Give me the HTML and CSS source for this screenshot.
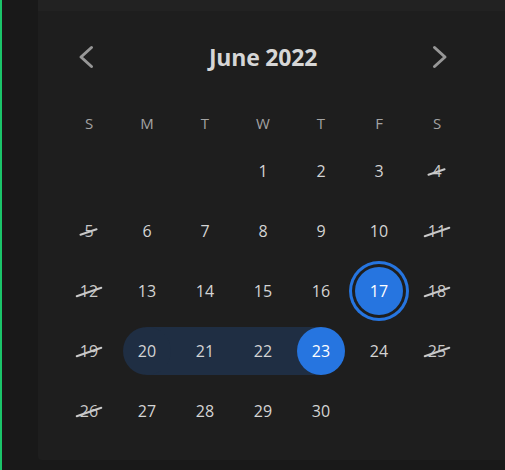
FILE: index.html
```html
<!DOCTYPE html>
<html lang="en">
<head>
<meta charset="utf-8">
<title>Calendar</title>
<link rel="stylesheet" href="styles.css">
</head>
<body>
<div class="app">
  <div class="rail"></div>
  <div class="main">
    <div class="topbar"></div>
    <div class="card">
      <div class="cal">
        <div class="head">
          <button class="nav" aria-label="Previous month">
            <svg width="16" height="24" viewBox="0 0 16 24"><polyline points="13.5,2.5 3,12 13.5,21.5" fill="none" stroke="currentColor" stroke-width="3" stroke-linecap="round" stroke-linejoin="round"/></svg>
          </button>
          <div class="title">June 2022</div>
          <button class="nav" aria-label="Next month">
            <svg width="16" height="24" viewBox="0 0 16 24"><polyline points="2.5,2.5 13,12 2.5,21.5" fill="none" stroke="currentColor" stroke-width="3" stroke-linecap="round" stroke-linejoin="round"/></svg>
          </button>
        </div>
        <div class="weekdays">
          <span>S</span><span>M</span><span>T</span><span>W</span><span>T</span><span>F</span><span>S</span>
        </div>
        <div class="grid">
          <div class="cell"></div>
          <div class="cell"></div>
          <div class="cell"></div>
          <div class="cell"><span class="n">1</span></div>
          <div class="cell"><span class="n">2</span></div>
          <div class="cell"><span class="n">3</span></div>
          <div class="cell"><span class="n"><span class="strike">4</span></span></div>

          <div class="cell"><span class="n"><span class="strike">5</span></span></div>
          <div class="cell"><span class="n">6</span></div>
          <div class="cell"><span class="n">7</span></div>
          <div class="cell"><span class="n">8</span></div>
          <div class="cell"><span class="n">9</span></div>
          <div class="cell"><span class="n">10</span></div>
          <div class="cell"><span class="n"><span class="strike">11</span></span></div>

          <div class="cell"><span class="n"><span class="strike">12</span></span></div>
          <div class="cell"><span class="n">13</span></div>
          <div class="cell"><span class="n">14</span></div>
          <div class="cell"><span class="n">15</span></div>
          <div class="cell"><span class="n">16</span></div>
          <div class="cell"><span class="n sel">17</span></div>
          <div class="cell"><span class="n"><span class="strike">18</span></span></div>

          <div class="cell"><span class="n"><span class="strike">19</span></span></div>
          <div class="cell range-start"><span class="n band">20</span></div>
          <div class="cell range-mid"><span class="n">21</span></div>
          <div class="cell range-mid"><span class="n">22</span></div>
          <div class="cell range-end"><span class="n end">23</span></div>
          <div class="cell"><span class="n">24</span></div>
          <div class="cell"><span class="n"><span class="strike">25</span></span></div>

          <div class="cell"><span class="n"><span class="strike">26</span></span></div>
          <div class="cell"><span class="n">27</span></div>
          <div class="cell"><span class="n">28</span></div>
          <div class="cell"><span class="n">29</span></div>
          <div class="cell"><span class="n">30</span></div>
          <div class="cell"></div>
          <div class="cell"></div>
        </div>
      </div>
    </div>
  </div>
</div>
</body>
</html>
```
FILE: styles.css
```css
* { box-sizing: border-box; }

html, body {
  margin: 0;
  padding: 0;
}

body {
  width: 505px;
  height: 470px;
  overflow: hidden;
  background: #191919;
  font-family: "Open Sans", "Noto Sans", sans-serif;
  color: #d4d4d4;
}

.app {
  display: flex;
  height: 470px;
}

.rail {
  width: 38px;
  flex: none;
  border-left: 2px solid #1bc46a;
  background: #191919;
}

.main {
  flex: 1;
  display: flex;
  flex-direction: column;
}

.topbar {
  height: 11px;
  background: #222222;
}

.card {
  height: 449px;
  background: #1e1e1e;
  border-bottom-left-radius: 4px;
  padding: 25px 0 0 22px;
}

.cal {
  width: 406px;
}

.head {
  height: 42px;
  display: flex;
  align-items: center;
  justify-content: space-between;
}

.nav {
  width: 52px;
  height: 42px;
  padding: 0;
  border: 0;
  background: transparent;
  color: #979797;
  display: flex;
  align-items: center;
  justify-content: center;
}

.title {
  font-size: 23px;
  font-weight: 700;
  color: #d6d6d6;
  letter-spacing: -0.2px;
}

.weekdays {
  margin-top: 27px;
  height: 36px;
  display: grid;
  grid-template-columns: repeat(7, 58px);
  align-items: center;
  text-align: center;
  font-size: 15px;
  color: #a3a3a3;
}

.grid {
  display: grid;
  grid-template-columns: repeat(7, 58px);
  grid-auto-rows: 60px;
}

.cell {
  display: flex;
  align-items: center;
  justify-content: center;
}

.n {
  width: 48px;
  height: 48px;
  border-radius: 50%;
  display: flex;
  align-items: center;
  justify-content: center;
  font-size: 16px;
  color: #d4d4d4;
}

.strike {
  position: relative;
  color: #c9c9c9;
}

.strike::after {
  content: "";
  position: absolute;
  left: -5px;
  right: -5px;
  top: 50%;
  height: 2px;
  background: #c9c9c9;
  border-radius: 1px;
  transform: rotate(-19deg);
}

.sel {
  background: #2675e0;
  color: #ffffff;
  box-shadow: 0 0 0 3px #1e1e1e, 0 0 0 6px #2675e0;
}

.range-start {
  background: linear-gradient(#1f2e43, #1f2e43) right center / 50% 48px no-repeat;
}

.range-mid {
  background: linear-gradient(#1f2e43, #1f2e43) center / 100% 48px no-repeat;
}

.range-end {
  background: linear-gradient(#1f2e43, #1f2e43) left center / 50% 48px no-repeat;
}

.band {
  background: #1f2e43;
}

.end {
  background: #2675e0;
  color: #ffffff;
}
```
